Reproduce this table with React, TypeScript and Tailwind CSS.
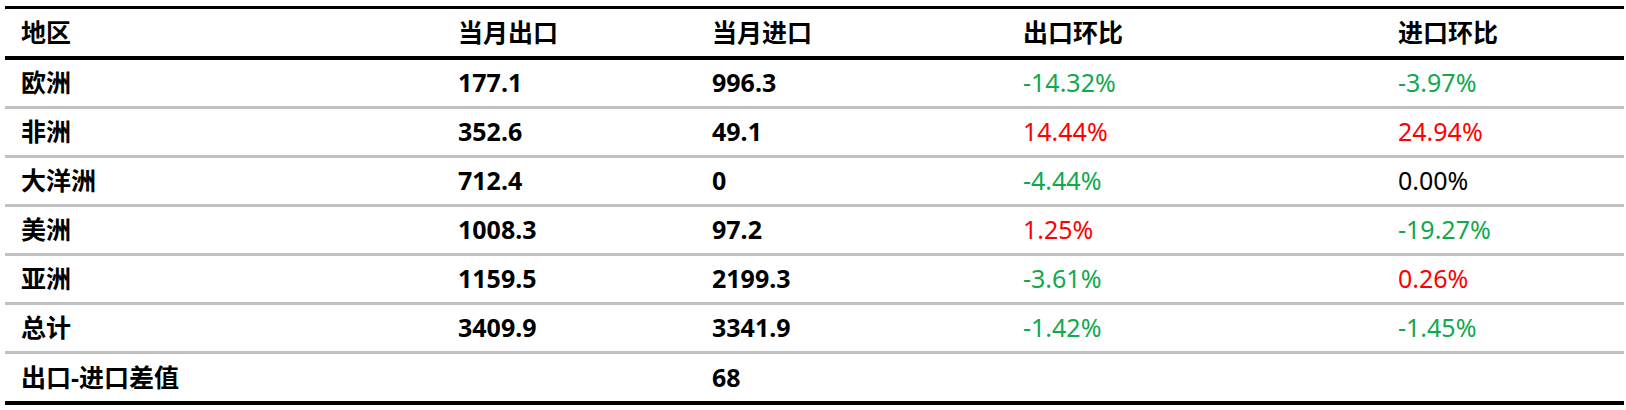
const rows: { region: string; exp: string; imp: string; expMom: string; impMom: string }[] = [
  { region: "欧洲", exp: "177.1", imp: "996.3", expMom: "-14.32%", impMom: "-3.97%" },
  { region: "非洲", exp: "352.6", imp: "49.1", expMom: "14.44%", impMom: "24.94%" },
  { region: "大洋洲", exp: "712.4", imp: "0", expMom: "-4.44%", impMom: "0.00%" },
  { region: "美洲", exp: "1008.3", imp: "97.2", expMom: "1.25%", impMom: "-19.27%" },
  { region: "亚洲", exp: "1159.5", imp: "2199.3", expMom: "-3.61%", impMom: "0.26%" },
  { region: "总计", exp: "3409.9", imp: "3341.9", expMom: "-1.42%", impMom: "-1.45%" },
];

// red when up, green when down, black when flat
const pctColor = (v: string) => {
  const n = parseFloat(v);
  if (n > 0) return "text-[#ff0000]";
  if (n < 0) return "text-[#12a84e]";
  return "text-black";
};

const cols = "grid grid-cols-[438px_254px_310px_376px_241px]";

export default function App() {
  return (
    <div
      className="w-[1626px] h-[410px] bg-white pt-[6px] pl-[5px] text-[25px] text-black"
      style={{ fontFamily: '"Noto Sans", "Noto Sans CJK SC", sans-serif' }}
    >
      <div className="w-[1619px] border-t-[3px] border-black">
        <div className={`${cols} h-[51px] border-b-[4px] border-black font-bold items-center`}>
          <div className="pl-[16px]">地区</div>
          <div className="pl-[15px]">当月出口</div>
          <div className="pl-[15px]">当月进口</div>
          <div className="pl-[16px]">出口环比</div>
          <div className="pl-[15px]">进口环比</div>
        </div>
        {rows.map((r) => (
          <div key={r.region} className={`${cols} h-[49px] border-b-[3px] border-[#c0c0c0] items-center`}>
            <div className="pl-[16px] font-bold">{r.region}</div>
            <div className="pl-[15px] font-bold">{r.exp}</div>
            <div className="pl-[15px] font-bold">{r.imp}</div>
            <div className={`pl-[16px] ${pctColor(r.expMom)}`}>{r.expMom}</div>
            <div className={`pl-[15px] ${pctColor(r.impMom)}`}>{r.impMom}</div>
          </div>
        ))}
        <div className={`${cols} h-[51px] border-b-[4px] border-black items-center font-bold`}>
          <div className="pl-[16px]">出口-进口差值</div>
          <div />
          <div className="pl-[15px]">68</div>
          <div />
          <div />
        </div>
      </div>
    </div>
  );
}
